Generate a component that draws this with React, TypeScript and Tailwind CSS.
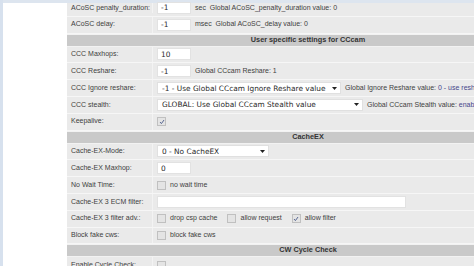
import React from "react";

const label = "font-['Liberation_Sans',Arial,sans-serif] text-[7px] text-[#3e3e3e]";
const field = "font-['DejaVu_Sans',Verdana,sans-serif] text-[7.4px] text-[#2a2a2a]";

const Row = ({ name, children, first }: { name: string; children?: React.ReactNode; first?: boolean }) => (
  <div
    className={`flex border-b border-[#f6f6f6] bg-[#eaeaea] ${first ? "h-[13.8px] pb-[3px]" : "h-[16.8px]"}`}
  >
    <div className={`w-[86px] shrink-0 flex items-center pl-[4px] border-r border-[#f3f3f3] ${label}`}>{name}</div>
    <div className="flex-1 flex items-center pl-[4px] gap-[4px]">{children}</div>
  </div>
);

const Header = ({ title }: { title: string }) => (
  <div className="h-[13px] border-b border-[#f2f2f2] border-t border-t-[#f2f2f2] bg-[#c9c9c9] flex items-center justify-center">
    <span className="font-['Liberation_Sans',Arial,sans-serif] text-[7.3px] font-bold text-[#333]">{title}</span>
  </div>
);

const TextBox = ({ value = "", w = "w-[34px]" }: { value?: string; w?: string }) => (
  <div className={`${w} h-[12px] bg-white border border-[#e2e2e2] flex items-center pl-[3px] ${field}`}>{value}</div>
);

const Select = ({ value, w }: { value: string; w: string }) => (
  <div className={`${w} h-[12px] bg-white border border-[#e0e0e0] flex items-center justify-between pl-[4px] pr-[3px] ${field}`}>
    <span className="whitespace-nowrap overflow-hidden">{value}</span>
    <svg width="5" height="3" viewBox="0 0 5 3" className="shrink-0">
      <path d="M0 0 L5 0 L2.5 3 Z" fill="#222" />
    </svg>
  </div>
);

const Check = ({ checked }: { checked?: boolean }) => (
  <span className="w-[9px] h-[9px] shrink-0 bg-[#e4e4e4] border border-[#c0c0c0] flex items-center justify-center">
    {checked && (
      <svg width="6" height="6" viewBox="0 0 6 6">
        <path d="M1 3 L2.4 4.6 L5 1" stroke="#4a5a8a" strokeWidth="0.9" fill="none" />
      </svg>
    )}
  </span>
);

const Note = ({ children }: { children: React.ReactNode }) => (
  <span className={`${label} whitespace-nowrap`}>{children}</span>
);

export default function App() {
  return (
    <div className="w-[474px] h-[266px] overflow-hidden bg-white flex">
      <div className="w-[3px] shrink-0 bg-[#d7e1ee]" />
      <div className="flex-1 flex flex-col min-w-0">
        <div className="h-[3px] bg-[#dde5ef] shrink-0" />
        <div className="flex">
          <div className="w-[64px] shrink-0" />
          <div className="w-[482px] shrink-0 flex flex-col">
            <Row name="ACoSC penalty_duration:" first>
              <TextBox value="-1" />
              <Note>sec&nbsp; Global ACoSC_penalty_duration value: 0</Note>
            </Row>
            <Row name="ACoSC delay:">
              <TextBox value="-1" />
              <Note>msec&nbsp; Global ACoSC_delay value: 0</Note>
            </Row>
            <Header title="User specific settings for CCcam" />
            <Row name="CCC Maxhops:">
              <TextBox value="10" />
            </Row>
            <Row name="CCC Reshare:">
              <TextBox value="-1" />
              <Note>
                Global CCcam Reshare: <span>1</span>
              </Note>
            </Row>
            <Row name="CCC Ignore reshare:">
              <Select value="-1 - Use Global CCcam Ignore Reshare value" w="w-[184px]" />
              <Note>
                Global Ignore Reshare value: <span className="text-[#46468a]">0 - use reshare level of Server</span>
              </Note>
            </Row>
            <Row name="CCC stealth:">
              <Select value="GLOBAL: Use Global CCcam Stealth value" w="w-[206px]" />
              <Note>
                Global CCcam Stealth value: <span className="text-[#46468a]">enable</span>
              </Note>
            </Row>
            <Row name="Keepalive:">
              <Check checked />
            </Row>
            <Header title="CacheEX" />
            <Row name="Cache-EX-Mode:">
              <Select value="0 - No CacheEX" w="w-[112px]" />
            </Row>
            <Row name="Cache-EX Maxhop:">
              <TextBox value="0" />
            </Row>
            <Row name="No Wait Time:">
              <Check />
              <Note>no wait time</Note>
            </Row>
            <Row name="Cache-EX 3 ECM filter:">
              <TextBox w="w-[249px]" />
            </Row>
            <Row name="Cache-EX 3 filter adv.:">
              <Check />
              <Note>drop csp cache</Note>
              <span className="w-[2px]" />
              <Check />
              <Note>allow request</Note>
              <span className="w-[2px]" />
              <Check checked />
              <Note>allow filter</Note>
            </Row>
            <Row name="Block fake cws:">
              <Check />
              <Note>block fake cws</Note>
            </Row>
            <Header title="CW Cycle Check" />
            <Row name="Enable Cycle Check:">
              <Check />
            </Row>
          </div>
        </div>
      </div>
    </div>
  );
}
